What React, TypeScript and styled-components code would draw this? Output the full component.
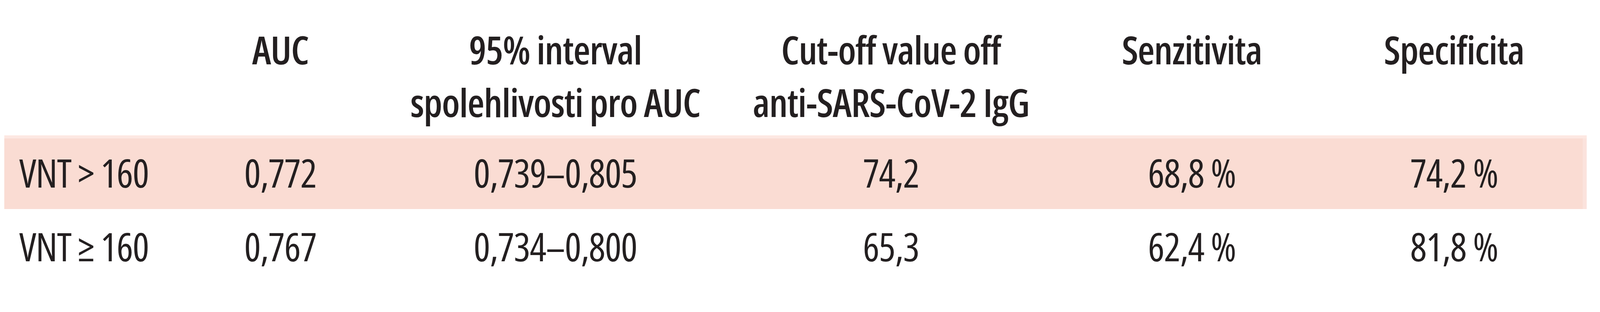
import * as React from "react";
import styled, { createGlobalStyle } from "styled-components";

const GlobalStyle = createGlobalStyle`
  body {
    margin: 0;
    background: #ffffff;
  }
`;

// column widths measured on the 6377px wide layout, used as fractions
const COLUMNS = "659fr 882fr 1310fr 1366fr 1032fr 1058fr";

const Table = styled.div`
  margin: 0 0.83% 0 0.27%;
  font-family: "Open Sans", "Roboto", sans-serif;
  font-stretch: 75%;
  font-size: 100px;
  letter-spacing: -0.015em;
  color: #231f20;

  @media (min-width: 5000px) {
    font-stretch: 97%;
    font-size: 104px;
    letter-spacing: 0;
  }
`;

const HeaderRow = styled.div`
  display: grid;
  grid-template-columns: ${COLUMNS};
  height: 347px;
  box-sizing: border-box;
  padding-top: 59px;
`;

const HeaderCell = styled.div`
  font-weight: 600;
  line-height: 135px;
  text-align: center;
  white-space: nowrap;
`;

const Row = styled.div<{ $highlight?: boolean }>`
  display: grid;
  grid-template-columns: ${COLUMNS};
  height: 189px;
  background: ${(p) => (p.$highlight ? "#fadcd3" : "transparent")};
  box-shadow: ${(p) =>
    p.$highlight ? "inset 0 8px 0 #fde8e2, inset -0.25vw 0 0 #fbe3dd" : "none"};
`;

const Cell = styled.div<{ $first?: boolean }>`
  line-height: 187px;
  padding-top: 2px;
  text-align: ${(p) => (p.$first ? "left" : "center")};
  padding-left: ${(p) => (p.$first ? "9.1%" : "0")};
  white-space: nowrap;
`;

interface RowData {
  label: string;
  auc: string;
  interval: string;
  cutoff: string;
  sensitivity: string;
  specificity: string;
}

const rows: RowData[] = [
  {
    label: "VNT > 160",
    auc: "0,772",
    interval: "0,739–0,805",
    cutoff: "74,2",
    sensitivity: "68,8 %",
    specificity: "74,2 %"
  },
  {
    label: "VNT ≥ 160",
    auc: "0,767",
    interval: "0,734–0,800",
    cutoff: "65,3",
    sensitivity: "62,4 %",
    specificity: "81,8 %"
  }
];

const App: React.FC = () => (
  <>
    <GlobalStyle />
    <Table>
      <HeaderRow>
        <HeaderCell />
        <HeaderCell>AUC</HeaderCell>
        <HeaderCell>
          95% interval
          <br />
          spolehlivosti pro AUC
        </HeaderCell>
        <HeaderCell>
          Cut-off value off
          <br />
          anti-SARS-CoV-2 IgG
        </HeaderCell>
        <HeaderCell>Senzitivita</HeaderCell>
        <HeaderCell>Specificita</HeaderCell>
      </HeaderRow>
      {rows.map((row, i) => (
        <Row key={row.label} $highlight={i === 0}>
          <Cell $first>{row.label}</Cell>
          <Cell>{row.auc}</Cell>
          <Cell>{row.interval}</Cell>
          <Cell>{row.cutoff}</Cell>
          <Cell>{row.sensitivity}</Cell>
          <Cell>{row.specificity}</Cell>
        </Row>
      ))}
    </Table>
  </>
);

export default App;
